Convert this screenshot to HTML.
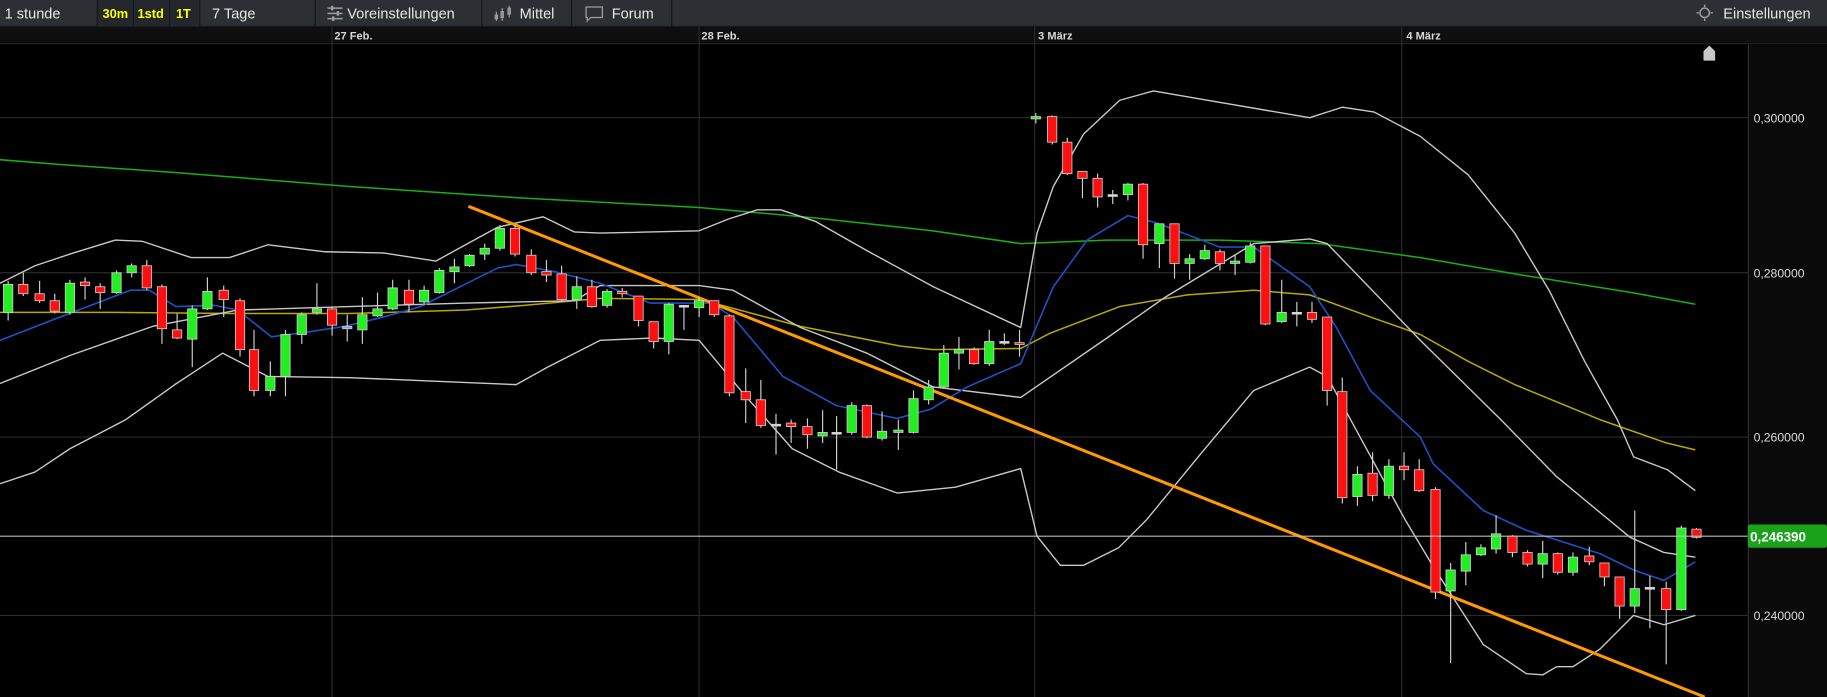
<!DOCTYPE html>
<html><head><meta charset="utf-8">
<style>
html,body{margin:0;padding:0;background:#000;width:1827px;height:697px;overflow:hidden}
svg{display:block;overflow:hidden}
text{font-family:"Liberation Sans",sans-serif}
</style></head>
<body>
<svg id="s" width="1827" height="697" viewBox="0 0 1568 598" preserveAspectRatio="none" xmlns="http://www.w3.org/2000/svg">
<rect x="0" y="0" width="1568" height="598" fill="#000"/>
<rect x="0" y="0" width="1568" height="23" fill="#2c3034"/>
<rect x="0" y="22" width="1568" height="1" fill="#1a1c1e"/>
<rect x="83" y="0" width="88" height="23" fill="#23272b"/>
<g fill="#15171a">
<rect x="83" y="0" width="1" height="23"/><rect x="114" y="0" width="1" height="23"/><rect x="145" y="0" width="1" height="23"/><rect x="171" y="0" width="1" height="23"/><rect x="270" y="0" width="1" height="23"/><rect x="413" y="0" width="1" height="23"/><rect x="490" y="0" width="1" height="23"/><rect x="576" y="0" width="1" height="23"/>
</g>
<g font-size="12.5" fill="#e6e6e6">
<text x="4" y="16">1 stunde</text>
<text x="182" y="16">7 Tage</text>
<text x="298" y="16">Voreinstellungen</text>
<text x="446" y="16">Mittel</text>
<text x="525" y="16">Forum</text>
<text x="1479" y="16">Einstellungen</text>
</g>
<g font-size="11" fill="#ffff00" font-weight="bold">
<text x="88" y="15.5">30m</text>
<text x="118" y="15.5">1std</text>
<text x="151" y="15.5">1T</text>
</g>
<g stroke="#9a9ea2" stroke-width="1.3">
<line x1="281" y1="7" x2="294" y2="7"/><line x1="281" y1="11.5" x2="294" y2="11.5"/><line x1="281" y1="16" x2="294" y2="16"/>
</g>
<g fill="#9a9ea2"><rect x="284" y="5" width="2" height="4"/><rect x="289" y="9.5" width="2" height="4"/><rect x="285" y="14" width="2" height="4"/></g>
<g stroke="#9a9ea2" stroke-width="1" fill="none">
<line x1="426" y1="10" x2="426" y2="18"/><rect x="425" y="13" width="2" height="3"/>
<line x1="431" y1="7" x2="431" y2="18"/><rect x="430" y="10" width="2" height="5"/>
<line x1="437" y1="5" x2="437" y2="15"/><rect x="436" y="7" width="2" height="5"/>
</g>
<path d="M503 6 h14 v9 h-10 l-3 3 v-3 h-1 z" fill="none" stroke="#9a9ea2" stroke-width="1.1"/>
<g stroke="#9a9ea2" stroke-width="1.3" fill="none">
<circle cx="1463" cy="11" r="4"/>
<line x1="1463" y1="4" x2="1463" y2="6"/><line x1="1463" y1="16" x2="1463" y2="18"/>
<line x1="1456" y1="11" x2="1458" y2="11"/><line x1="1468" y1="11" x2="1470" y2="11"/>
</g>
<rect x="0" y="23" width="1568" height="14" fill="#0e0e0e"/>
<rect x="0" y="37" width="1568" height="1" fill="#222"/>
<g font-size="9.5" fill="#d8d8d8" font-weight="bold">
<text x="287" y="34">27 Feb.</text>
<text x="602" y="34">28 Feb.</text>
<text x="891" y="34">3 März</text>
<text x="1207" y="34">4 März</text>
</g>
<g stroke="#2a2a2a" stroke-width="1">
<line x1="285" y1="23" x2="285" y2="598"/><line x1="600" y1="23" x2="600" y2="598"/><line x1="888" y1="23" x2="888" y2="598"/><line x1="1203" y1="23" x2="1203" y2="598"/>
<line x1="0" y1="101" x2="1500" y2="101"/><line x1="0" y1="234" x2="1500" y2="234"/><line x1="0" y1="375" x2="1500" y2="375"/><line x1="0" y1="528" x2="1500" y2="528"/>
</g>
<rect x="1500" y="38" width="68" height="560" fill="#0a0a0a"/>
<rect x="1500" y="38" width="1" height="560" fill="#2e2e2e"/>
<g font-size="10.5" fill="#dcdcdc">
<text x="1505" y="105">0,300000</text>
<text x="1505" y="238">0,280000</text>
<text x="1505" y="379">0,260000</text>
<text x="1505" y="532">0,240000</text>
</g>
<path d="M1462 44 l5 -5 l5 5 v8 h-10 z" fill="#c8c8c8"/>
<g id="lines" fill="none" stroke-linejoin="round"></g>
<g id="candles"></g>
<line x1="0" y1="460" x2="1500" y2="460" stroke="#bdbdbd" stroke-width="1"/>
<rect x="1500" y="450" width="68" height="20" rx="2" fill="#1aa31a"/>
<text x="1502" y="464.5" font-size="11.5" font-weight="bold" fill="#fff">0,246390</text>
</svg>
<script>
var NS="http://www.w3.org/2000/svg";
function el(p,n,a){var e=document.createElementNS(NS,n);for(var k in a)e.setAttribute(k,a[k]);p.appendChild(e);return e;}
var L=document.getElementById('lines');
function poly(pts,c,w){el(L,'polyline',{points:pts,stroke:c,'stroke-width':w});}
poly("0,137 50,141 150,148 300,160 450,170 600,178 700,187 800,198 876,209 950,206 1047,206 1133,209 1219,221 1300,235 1400,251 1455,261","#16b016",1.3);
poly("0,268 100,268 200,269 300,269 400,266 450,262 515,256 601,257 687,280 773,297 801,300 876,299 901,286 961,263 1019,253 1076,249 1124,253 1179,273 1219,287 1260,310 1300,330 1373,360 1430,380 1455,386","#b8a800",1.3);
poly("0,243 30,228 60,218 99,206 122,207 164,221 197,221 230,210 279,216 329,217 374,224 427,195 466,186 493,199 515,200 600,198 625,188 650,180 670,180 700,190 744,215 801,246 876,281 890,200 904,160 930,115 961,86 990,78 1036,86 1124,101 1152,92 1179,96 1219,117 1260,150 1300,200 1330,250 1360,310 1388,360 1402,392 1431,403 1455,421","#c8c8c8",1.2);
poly("0,329 60,305 131,280 204,266 300,263 400,260 493,258 515,245 600,245 629,249 687,281 744,303 801,332 876,341 950,290 1000,255 1076,209 1124,205 1139,209 1219,292 1288,360 1336,409 1399,461 1428,474 1455,478","#c8c8c8",1.2);
poly("0,415 30,405 60,385 108,360 150,330 191,303 230,323 300,324 443,330 470,315 515,292 560,290 600,292 640,340 680,385 720,405 770,423 820,418 876,402 890,460 910,485 930,485 960,470 984,446 1030,390 1076,335 1124,315 1139,323 1170,380 1206,446 1230,486 1273,553 1310,578 1324,579 1336,572 1350,572 1373,557 1402,528 1428,536 1455,528","#c8c8c8",1.2);
poly("0,292 49,273 112,249 128,249 151,263 184,262 204,266 233,289 263,285 296,280 329,272 361,263 427,230 443,227 476,233 515,243 558,260 610,260 629,272 672,323 718,348 770,359 799,351 830,332 876,312 904,246 933,206 968,185 992,191 1047,212 1076,212 1124,246 1147,281 1176,335 1219,375 1230,398 1273,438 1310,455 1373,475 1402,489 1428,498 1455,482","#1f4fc0",1.4);
el(L,'line',{x1:402,y1:177,x2:1463,y2:598,stroke:'#ff9a00','stroke-width':2.6});
var C=[[7,244,268,241,275,'g'],[20,244,252,234,254,'r'],[34,252,258,241,260,'r'],[47,258,267,252,269,'r'],[60,243,268,240,270,'g'],[73,242,245,238,257,'r'],[86,246,251,243,265,'r'],[100,234,251,232,252,'g'],[113,228,234,226,238,'g'],[126,228,247,223,249,'r'],[139,246,282,244,295,'r'],[152,283,290,269,291,'r'],[165,265,291,262,315,'g'],[178,250,265,238,266,'g'],[192,249,257,245,272,'r'],[206,258,300,256,306,'r'],[218,300,335,283,340,'r'],[232,323,335,310,340,'g'],[245,287,323,283,340,'g'],[259,270,287,268,295,'g'],[272,265,268,243,270,'g'],[285,265,279,263,288,'r'],[298,280,282,270,293,'b'],[311,270,283,255,295,'g'],[324,265,271,251,272,'g'],[337,247,265,240,266,'g'],[351,249,261,240,268,'r'],[364,249,259,245,262,'g'],[377,232,251,230,252,'g'],[390,229,233,222,243,'g'],[403,219,228,218,229,'g'],[416,213,218,209,223,'g'],[429,196,213,193,215,'g'],[442,196,218,193,220,'r'],[456,219,234,214,236,'r'],[469,233,236,223,242,'r'],[482,235,257,228,259,'r'],[495,246,257,237,265,'g'],[508,246,263,240,264,'r'],
[521,250,262,248,264,'g'],[534,250,252,247,255,'r'],[548,254,275,254,280,'r'],[561,276,293,276,299,'r'],[574,261,293,260,304,'g'],[587,262,262,262,283,'w'],[600,258,264,255,272,'g'],[613,258,270,258,272,'r'],[626,271,337,270,340,'r'],[640,336,343,316,363,'r'],[653,343,365,326,367,'r'],[666,364,364,355,390,'w'],[679,363,366,360,380,'r'],[693,366,373,359,385,'r'],[706,371,374,352,380,'g'],[718,371,371,357,403,'w'],[731,348,371,345,373,'g'],[744,348,375,347,376,'r'],[757,370,376,353,378,'g'],[771,369,371,360,386,'g'],[784,342,371,335,372,'g'],[797,332,343,326,347,'g'],[810,303,332,296,333,'g'],[823,300,303,289,317,'g'],[836,300,312,298,313,'r'],[849,293,312,283,314,'g'],[862,293,293,286,296,'w'],[875,294,294,283,306,'r'],
[889,100,102,97,106,'g'],[903,100,122,99,124,'r'],[916,122,149,118,150,'r'],[929,147,153,147,170,'r'],[942,153,169,149,178,'r'],[955,167,167,163,175,'w'],[968,158,167,157,172,'g'],[981,158,210,157,222,'r'],[995,192,209,192,230,'g'],[1008,192,226,192,239,'r'],[1021,222,226,218,240,'g'],[1034,215,222,210,223,'g'],[1047,216,226,214,232,'r'],[1060,224,226,219,236,'g'],[1073,211,225,208,226,'g'],[1086,211,278,211,279,'r'],[1100,268,276,240,277,'g'],[1113,268,268,259,280,'w'],[1126,268,274,259,277,'r'],[1139,272,335,272,348,'r'],[1152,336,427,324,432,'r'],[1165,407,426,400,434,'g'],[1178,406,425,388,430,'r'],[1192,400,425,394,428,'g'],[1205,400,403,388,412,'r'],
[1218,403,421,394,422,'r'],[1232,420,508,418,514,'r'],[1245,489,507,483,569,'g'],[1258,476,490,465,502,'g'],[1271,470,476,467,477,'g'],[1284,458,471,442,475,'g'],[1298,460,474,459,478,'r'],[1311,474,484,472,486,'r'],[1324,475,484,464,496,'g'],[1337,475,491,474,493,'r'],[1350,478,491,474,494,'g'],[1364,477,482,469,485,'r'],[1377,483,495,483,503,'r'],[1390,495,520,495,531,'r'],[1403,505,520,438,526,'g'],[1416,504,504,494,539,'w'],[1430,505,523,499,570,'r'],[1443,453,523,451,524,'g'],[1456,454,461,453,462,'r']];
var G=document.getElementById('candles');
var col={g:'#22ee22',r:'#ff1010',w:'#dddddd',b:'#8899dd'};
C.forEach(function(c){
 el(G,'line',{x1:c[0],y1:c[3],x2:c[0],y2:c[4],stroke:'#cfcfcf','stroke-width':1});
 var h=Math.max(c[2]-c[1],1.5);
 el(G,'rect',{x:c[0]-4,y:c[1],width:8,height:h,fill:col[c[5]],stroke:'#d0d0d0','stroke-width':0.7});
});
</script>
</body></html>
